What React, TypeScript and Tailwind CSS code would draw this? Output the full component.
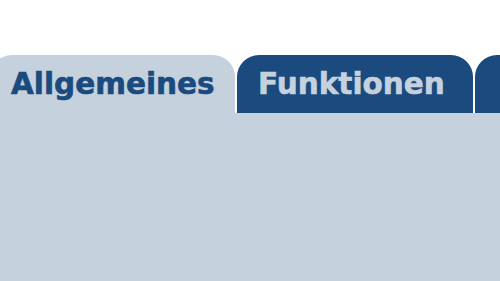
import React from 'react';

const tabs = [
  { label: 'Allgemeines', active: true, width: 'w-[245px]' },
  { label: 'Funktionen', active: false, width: 'w-[236px]' },
  { label: '', active: false, width: 'w-[120px]' },
];

const App = () => {
  return (
    <div className="w-[500px] h-[281px] overflow-hidden bg-white flex flex-col font-['DejaVu_Sans',sans-serif]">
      <div className="flex gap-[2px] -ml-[10px] pt-[55px] shrink-0">
        {tabs.map((tab, i) => (
          <div
            key={i}
            className={`${tab.width} shrink-0 h-[58px] rounded-t-[22px] flex items-center pl-[21px] pt-[1px] whitespace-nowrap overflow-hidden ${
              tab.active ? 'bg-[#c5d1dd] text-[#1b4a7e]' : 'bg-[#1b4a7e] text-[#c5d1dd]'
            }`}
          >
            <span className="text-[29.5px] font-bold leading-none [-webkit-text-stroke:0.6px_currentColor]">{tab.label}</span>
          </div>
        ))}
      </div>
      <div className="flex-1 bg-[#c5d1dd]" />
    </div>
  );
};

export default App;
